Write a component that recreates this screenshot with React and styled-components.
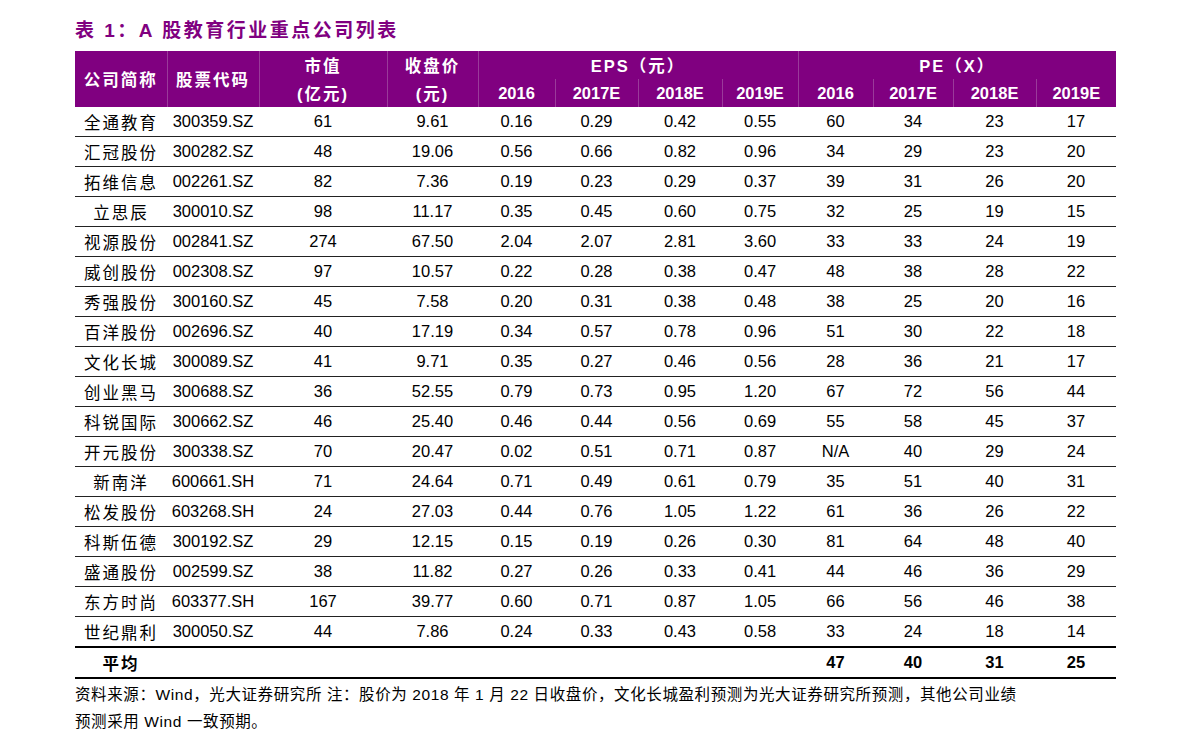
import React from "react";
import styled, { createGlobalStyle } from "styled-components";

const G = createGlobalStyle`
  body{margin:0;background:#fff;font-family:"Liberation Sans","Noto Sans CJK SC",sans-serif;color:#000;}
`;
const Page = styled.div`padding:14px 0 0 75px;width:1041px;`;
const Title = styled.div`color:#800080;font-weight:bold;font-size:19px;height:37px;line-height:34px;letter-spacing:2.5px;`;
const Table = styled.table`border-collapse:collapse;width:1041px;table-layout:fixed;font-size:16.5px;`;
const Th = styled.th`background:#800080;color:#fff;font-weight:bold;height:28px;padding:0;text-align:center;letter-spacing:2px;
  border-left:${p=>p.$sep?"1px solid #9a3a9a":"none"};`;
const Td = styled.td`height:29px;padding:0;text-align:center;border-bottom:1px solid #222;
  ${p=>p.$cjk?"letter-spacing:2px;":""}${p=>p.$bold?"font-weight:bold;":""}`;
const Tr = styled.tr`${p=>p.$last?"td{border-bottom:2px solid #000;}":""}`;
const Foot = styled.div`font-size:15.5px;line-height:27px;margin-top:2px;width:1060px;letter-spacing:0.6px;white-space:nowrap;`;

const widths=[92,92,128,91,77,83,84,76,75,80,83,80];
const rows=[
["全通教育","300359.SZ","61","9.61","0.16","0.29","0.42","0.55","60","34","23","17"],
["汇冠股份","300282.SZ","48","19.06","0.56","0.66","0.82","0.96","34","29","23","20"],
["拓维信息","002261.SZ","82","7.36","0.19","0.23","0.29","0.37","39","31","26","20"],
["立思辰","300010.SZ","98","11.17","0.35","0.45","0.60","0.75","32","25","19","15"],
["视源股份","002841.SZ","274","67.50","2.04","2.07","2.81","3.60","33","33","24","19"],
["威创股份","002308.SZ","97","10.57","0.22","0.28","0.38","0.47","48","38","28","22"],
["秀强股份","300160.SZ","45","7.58","0.20","0.31","0.38","0.48","38","25","20","16"],
["百洋股份","002696.SZ","40","17.19","0.34","0.57","0.78","0.96","51","30","22","18"],
["文化长城","300089.SZ","41","9.71","0.35","0.27","0.46","0.56","28","36","21","17"],
["创业黑马","300688.SZ","36","52.55","0.79","0.73","0.95","1.20","67","72","56","44"],
["科锐国际","300662.SZ","46","25.40","0.46","0.44","0.56","0.69","55","58","45","37"],
["开元股份","300338.SZ","70","20.47","0.02","0.51","0.71","0.87","N/A","40","29","24"],
["新南洋","600661.SH","71","24.64","0.71","0.49","0.61","0.79","35","51","40","31"],
["松发股份","603268.SH","24","27.03","0.44","0.76","1.05","1.22","61","36","26","22"],
["科斯伍德","300192.SZ","29","12.15","0.15","0.19","0.26","0.30","81","64","48","40"],
["盛通股份","002599.SZ","38","11.82","0.27","0.26","0.33","0.41","44","46","36","29"],
["东方时尚","603377.SH","167","39.77","0.60","0.71","0.87","1.05","66","56","46","38"],
["世纪鼎利","300050.SZ","44","7.86","0.24","0.33","0.43","0.58","33","24","18","14"],
];

export default function App(){
  return <><G/><Page>
    <Title>表 1：A 股教育行业重点公司列表</Title>
    <Table>
      <colgroup>{widths.map((w,i)=><col key={i} style={{width:w}}/>)}</colgroup>
      <thead>
        <tr>
          <Th rowSpan={2}>公司简称</Th><Th rowSpan={2} $sep>股票代码</Th>
          <Th $sep>市值</Th><Th $sep>收盘价</Th>
          <Th colSpan={4} $sep>EPS（元）</Th><Th colSpan={4} $sep>PE（X）</Th>
        </tr>
        <tr>
          <Th $sep>(亿元)</Th><Th $sep>(元)</Th>
          {["2016","2017E","2018E","2019E","2016","2017E","2018E","2019E"].map((t,i)=><Th key={i} $sep style={{letterSpacing:0}}>{t}</Th>)}
        </tr>
      </thead>
      <tbody>
        {rows.map((r,i)=><Tr key={i} $last={i===rows.length-1}>
          {r.map((c,j)=><Td key={j} $cjk={j===0}>{c}</Td>)}
        </Tr>)}
        <Tr $last>
          <Td $bold $cjk>平均</Td>
          {Array.from({length:7}).map((_,i)=><Td key={i}/>)}
          {["47","40","31","25"].map((v,i)=><Td key={i} $bold>{v}</Td>)}
        </Tr>
      </tbody>
    </Table>
    <Foot>资料来源：Wind，光大证券研究所 注：股价为 2018 年 1 月 22 日收盘价，文化长城盈利预测为光大证券研究所预测，其他公司业绩<br/>预测采用 Wind 一致预期。</Foot>
  </Page></>;
}
